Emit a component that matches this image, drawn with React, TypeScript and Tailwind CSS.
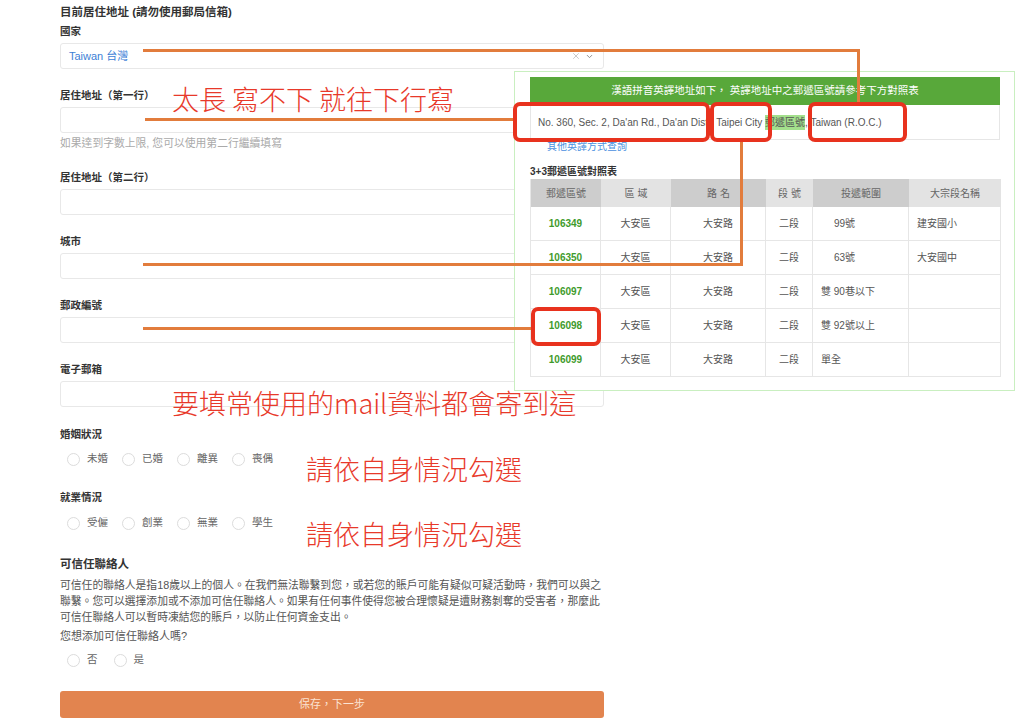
import { X, ChevronDown } from 'lucide-react';

const zipRows = [
  { zip: '106349', range: '99號', indent: true, name: '建安國小' },
  { zip: '106350', range: '63號', indent: true, name: '大安國中' },
  { zip: '106097', range: '雙 90巷以下', indent: false, name: '' },
  { zip: '106098', range: '雙 92號以上', indent: false, name: '' },
  { zip: '106099', range: '單全', indent: false, name: '' },
];

function Label({ text, className = '' }: { text: string; className?: string }) {
  return <div className={`text-[10.5px] leading-[14px] font-semibold text-[#333] ${className}`}>{text}</div>;
}

function Input() {
  return <div className="mt-[5px] h-[26px] rounded-[3px] border border-[#e8e8e8] bg-white" />;
}

function Radios({ items, gap = 'gap-[14px]' }: { items: string[]; gap?: string }) {
  return (
    <div className={`flex items-center pl-[7px] h-[16px] ${gap}`}>
      {items.map((t) => (
        <div key={t} className="flex items-center gap-[7px]">
          <span className="w-[13px] h-[13px] rounded-full border border-[#dcdcdc] bg-white" />
          <span className="text-[10.5px] text-[#666]">{t}</span>
        </div>
      ))}
    </div>
  );
}

function Form() {
  return (
    <div className="ml-[60px] w-[544px] pt-[4px]">
      <div className="text-[11.5px] leading-[16px] font-bold text-[#333]">目前居住地址 (請勿使用郵局信箱)</div>
      <Label text="國家" className="mt-[4px]" />
      <div className="mt-[5px] h-[26px] rounded-[3px] border border-[#e8e8e8] flex items-center pl-[8px] pr-[9px]">
        <span className="text-[11px] text-[#3d7fd6]">Taiwan 台灣</span>
        <div className="ml-auto flex items-center gap-[4px] text-[#aaa]">
          <X size={10} strokeWidth={1.5} />
          <ChevronDown size={9} strokeWidth={2.5} className="text-[#888]" />
        </div>
      </div>

      <Label text="居住地址（第一行）" className="mt-[19px]" />
      <Input />
      <div className="mt-[3px] text-[10.8px] leading-[14px] text-[#aaa]">如果達到字數上限, 您可以使用第二行繼續填寫</div>

      <Label text="居住地址（第二行）" className="mt-[20px]" />
      <Input />
      <Label text="城市" className="mt-[19px]" />
      <Input />
      <Label text="郵政編號" className="mt-[19px]" />
      <Input />
      <Label text="電子郵箱" className="mt-[19px]" />
      <Input />

      <Label text="婚姻狀況" className="mt-[20px]" />
      <div className="mt-[10px]">
        <Radios items={['未婚', '已婚', '離異', '喪偶']} />
      </div>
      <Label text="就業情況" className="mt-[23px]" />
      <div className="mt-[11px]">
        <Radios items={['受僱', '創業', '無業', '學生']} />
      </div>

      <div className="mt-[25px] text-[11.5px] leading-[16px] font-bold text-[#333]">可信任聯絡人</div>
      <p className="mt-[5px] text-[10.8px] leading-[16px] text-[#555] whitespace-nowrap">
        可信任的聯絡人是指18歲以上的個人。在我們無法聯繫到您，或若您的賬戶可能有疑似可疑活動時，我們可以與之
        <br />
        聯繫。您可以選擇添加或不添加可信任聯絡人。如果有任何事件使得您被合理懷疑是遭財務剝奪的受害者，那麼此
        <br />
        可信任聯絡人可以暫時凍結您的賬戶，以防止任何資金支出。
      </p>
      <div className="mt-[4px] text-[11px] leading-[14px] text-[#555]">您想添加可信任聯絡人嗎?</div>
      <div className="mt-[9px]">
        <Radios items={['否', '是']} gap="gap-[16px]" />
      </div>

      <button className="mt-[23px] w-full h-[27px] rounded-[3px] bg-[#e2844f] text-[11px] text-[#fbe3d3]">
        保存，下一步
      </button>
    </div>
  );
}

function ZipPanel() {
  const cell = 'flex items-center border-r border-b border-[#e6e6e6] text-[10px]';
  return (
    <div className="absolute left-[514px] top-[71px] w-[501px] h-[320px] bg-white border border-[#c9efc0] pl-[15px] pt-[5px]">
      <div className="w-[470px] h-[28px] bg-[#58a83a] flex items-center justify-center text-[10.5px] text-white">
        漢語拼音英譯地址如下， 英譯地址中之郵遞區號請參考下方對照表
      </div>
      <div className="w-[470px] h-[35px] border-x border-b border-[#e6e6e6] flex items-center pl-[7px] text-[10px] text-[#555] whitespace-nowrap">
        No. 360, Sec. 2, Da'an Rd., Da'an Dist., Taipei City&nbsp;
        <span className="bg-[#a3df8c]">郵遞區號</span>, Taiwan (R.O.C.)
      </div>
      <div className="pl-[17px] text-[10px] leading-[14px] text-[#4a8fe0]">其他英譯方式查詢</div>
      <div className="mt-[11px] text-[10px] leading-[14px] font-bold text-[#333]">3+3郵遞區號對照表</div>
      <div className="w-[470px] grid grid-cols-[70px_70px_95px_47px_96px_92px] border-l border-[#e6e6e6]">
        {['郵遞區號', '區 域', '路 名', '段 號', '投遞範圍', '大宗段名稱'].map((h, i) => (
          <div
            key={h}
            className={`h-[28px] flex items-center justify-center text-[10px] text-[#666] ${
              i % 2 === 0 ? 'bg-[#cdcdcd]' : 'bg-[#e3e3e3]'
            }`}
          >
            {h}
          </div>
        ))}
        {zipRows.map((r) => (
          <div key={r.zip} className="contents">
            <div className={`${cell} h-[34px] justify-center font-bold text-[#3f9b2c]`}>{r.zip}</div>
            <div className={`${cell} justify-center text-[#555]`}>大安區</div>
            <div className={`${cell} justify-center text-[#555]`}>大安路</div>
            <div className={`${cell} justify-center text-[#555]`}>二段</div>
            <div className={`${cell} text-[#555] ${r.indent ? 'pl-[21px]' : 'pl-[8px]'}`}>{r.range}</div>
            <div className={`${cell} pl-[8px] text-[#555]`}>{r.name}</div>
          </div>
        ))}
      </div>
    </div>
  );
}

function Annotations() {
  const line = 'absolute bg-[#e27c3c]';
  const box = 'absolute border-[4px] border-[#e8321e] rounded-[7px]';
  const note =
    "absolute text-[27px] leading-none font-light text-[#e8392a] whitespace-nowrap font-['Noto_Sans_CJK_TC',sans-serif]";
  return (
    <>
      <div className={`${line} left-[143px] top-[49px] w-[717px] h-[3px]`} />
      <div className={`${line} left-[857px] top-[49px] w-[3px] h-[55px]`} />
      <div className={`${line} left-[145px] top-[118px] w-[369px] h-[3px]`} />
      <div className={`${line} left-[143px] top-[263px] w-[600px] h-[3px]`} />
      <div className={`${line} left-[740px] top-[140px] w-[3px] h-[126px]`} />
      <div className={`${line} left-[143px] top-[327px] w-[390px] h-[3px]`} />

      <div className={`${box} left-[513px] top-[102px] w-[197px] h-[40px]`} />
      <div className={`${box} left-[710px] top-[102px] w-[62px] h-[40px]`} />
      <div className={`${box} left-[808px] top-[102px] w-[99px] h-[40px]`} />
      <div className={`${box} left-[531px] top-[307px] w-[70px] h-[39px]`} />

      <div className={`${note} left-[172px] top-[85px]`}>太長 寫不下 就往下行寫</div>
      <div className={`${note} left-[172px] top-[389px]`}>要填常使用的mail資料都會寄到這</div>
      <div className={`${note} left-[306px] top-[455px]`}>請依自身情況勾選</div>
      <div className={`${note} left-[306px] top-[520px]`}>請依自身情況勾選</div>
    </>
  );
}

export default function App() {
  return (
    <div className="relative w-[1024px] h-[728px] overflow-hidden bg-white font-['Liberation_Sans','Noto_Sans_CJK_TC',sans-serif]">
      <Form />
      <ZipPanel />
      <Annotations />
    </div>
  );
}
